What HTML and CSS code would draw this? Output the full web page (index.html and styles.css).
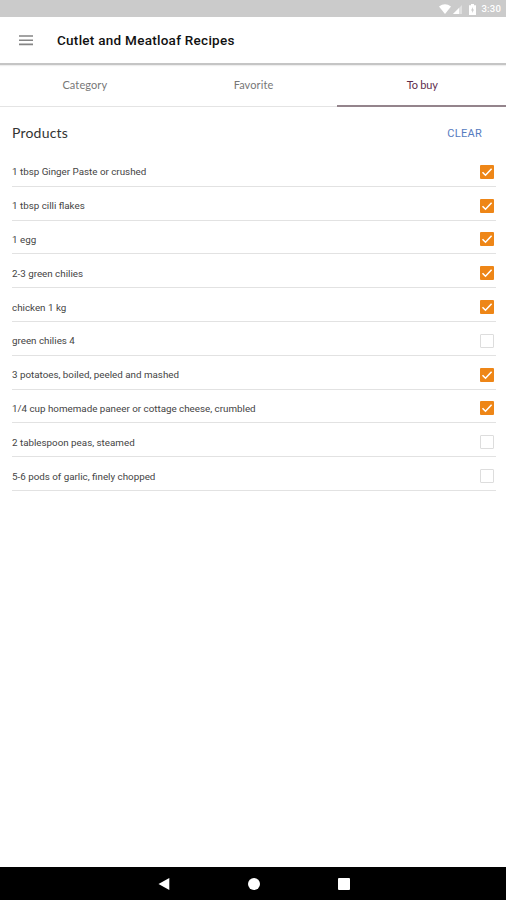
FILE: index.html
```html
<!DOCTYPE html>
<html lang="en">
<head>
<meta charset="utf-8">
<title>Cutlet and Meatloaf Recipes</title>
<link rel="stylesheet" href="styles.css">
</head>
<body>
<div class="status">
  <svg class="wifi" viewBox="0 0 12 10"><path d="M0 2.5Q6-2 12 2.5L6 10Z"/></svg>
  <svg class="signal" viewBox="0 0 9 9"><path class="faint" d="M0 9L9 0V9Z"/><path d="M0 9L6 3V9Z"/></svg>
  <svg class="battery" viewBox="0 0 7 11"><path fill-rule="evenodd" d="M2 0H5V1.2H7V11H0V1.2H2ZM3.9 3L2 6.5H3.2V9L5 5.5H3.9Z"/></svg>
  <span class="time">3:30</span>
</div>
<header class="appbar">
  <svg class="menu" viewBox="0 0 14 12"><path d="M0 2H14M0 6.2H14M0 10.4H14"/></svg>
  <h1 class="title">Cutlet and Meatloaf Recipes</h1>
</header>
<nav class="tabs">
  <div class="tab">Category</div>
  <div class="tab">Favorite</div>
  <div class="tab active">To buy</div>
</nav>
<main class="content">
  <div class="heading"><h2 class="products">Products</h2><button class="clear">CLEAR</button></div>
  <ul class="list">
    <li class="row"><span>1 tbsp Ginger Paste or crushed</span><svg class="box on" viewBox="0 0 14 14"><path d="M2.5 7.2L5.5 10.2L11.6 3.8"/></svg></li>
    <li class="row"><span>1 tbsp cilli flakes</span><svg class="box on" viewBox="0 0 14 14"><path d="M2.5 7.2L5.5 10.2L11.6 3.8"/></svg></li>
    <li class="row"><span>1 egg</span><svg class="box on" viewBox="0 0 14 14"><path d="M2.5 7.2L5.5 10.2L11.6 3.8"/></svg></li>
    <li class="row"><span>2-3 green chilies</span><svg class="box on" viewBox="0 0 14 14"><path d="M2.5 7.2L5.5 10.2L11.6 3.8"/></svg></li>
    <li class="row"><span>chicken 1 kg</span><svg class="box on" viewBox="0 0 14 14"><path d="M2.5 7.2L5.5 10.2L11.6 3.8"/></svg></li>
    <li class="row"><span>green chilies 4</span><i class="box"></i></li>
    <li class="row"><span>3 potatoes, boiled, peeled and mashed</span><svg class="box on" viewBox="0 0 14 14"><path d="M2.5 7.2L5.5 10.2L11.6 3.8"/></svg></li>
    <li class="row"><span>1/4 cup homemade paneer or cottage cheese, crumbled</span><svg class="box on" viewBox="0 0 14 14"><path d="M2.5 7.2L5.5 10.2L11.6 3.8"/></svg></li>
    <li class="row"><span>2 tablespoon peas, steamed</span><i class="box"></i></li>
    <li class="row"><span>5-6 pods of garlic, finely chopped</span><i class="box"></i></li>
  </ul>
</main>
<footer class="navbar">
  <svg viewBox="0 0 12 12"><path d="M0.5 6L11.3 0V12Z"/></svg>
  <svg viewBox="0 0 12 12"><circle cx="6" cy="6" r="6"/></svg>
  <svg viewBox="0 0 12 12"><rect width="12" height="12" rx="1"/></svg>
</footer>
</body>
</html>
```
FILE: styles.css
```css
* { box-sizing: border-box; }
body {
  margin: 0;
  height: 900px;
  display: flex;
  flex-direction: column;
  overflow: hidden;
  background: #fff;
  font-family: Roboto, sans-serif;
  color: #333;
}
.status {
  height: 17px;
  background: #cbcbcb;
  display: flex;
  align-items: center;
  justify-content: flex-end;
  padding: 1px 5px 0 0;
  color: #fff;
}
.status svg { fill: #fff; }
.wifi { width: 12px; height: 10px; }
.signal { width: 9px; height: 9px; margin-left: 2px; }
.faint { opacity: .4; }
.battery { width: 7px; height: 11px; margin: 0 5px 0 7px; }
.time { font-size: 9.5px; font-weight: 500; line-height: 12px; letter-spacing: .2px; }
.appbar {
  height: 47.5px;
  display: flex;
  align-items: center;
  padding: 0 19px;
  border-bottom: 2px solid #c5c5c5;
  box-shadow: 0 1px 1px #eee;
}
.menu { width: 14px; height: 12px; fill: none; stroke: #858585; stroke-width: 1.6; }
.title { margin: 0 0 0 24px; font-size: 13.5px; font-weight: 500; letter-spacing: .27px; color: #111; }
.tabs { height: 42.5px; display: grid; grid-template-columns: repeat(3, 1fr); }
.tab {
  display: flex;
  align-items: center;
  justify-content: center;
  padding: 0 0 1px 1px;
  border-bottom: 1px solid #e4e4e4;
  font: 11px Lato, sans-serif;
  letter-spacing: .1px;
  color: #777;
}
.active { padding: 0 0 0 1px; letter-spacing: -.2px; color: #602c4c; border-bottom: 2px solid #94848c; }
.content { flex: 1; padding: 0 10px 0 12px; }
.heading { height: 46px; display: flex; align-items: center; justify-content: space-between; padding: 5px 14px 0 0; }
.products { margin: 0; font: 14px Lato, sans-serif; letter-spacing: .2px; color: #333; }
.clear { border: 0; padding: 1px 0 0; background: none; font: 11px Roboto, sans-serif; letter-spacing: .3px; color: #557bc0; }
.list { list-style: none; margin: 0; padding: 0; }
.row {
  height: 33.8px;
  display: flex;
  align-items: center;
  justify-content: space-between;
  padding: 5px 2px 0 0;
  border-bottom: 1px solid #e2e2e2;
  font-size: 9.8px;
  color: #444;
}
.box { width: 14px; height: 14px; border: 1px solid #ddd; border-radius: 1px; }
.on { border: 0; background: #ee8617; fill: none; stroke: #fff; stroke-width: 1.6; }
.navbar { height: 33px; background: #000; display: flex; align-items: center; justify-content: center; gap: 78px; padding-left: 1px; }
.navbar svg { width: 12px; height: 12px; fill: #fff; }
```
